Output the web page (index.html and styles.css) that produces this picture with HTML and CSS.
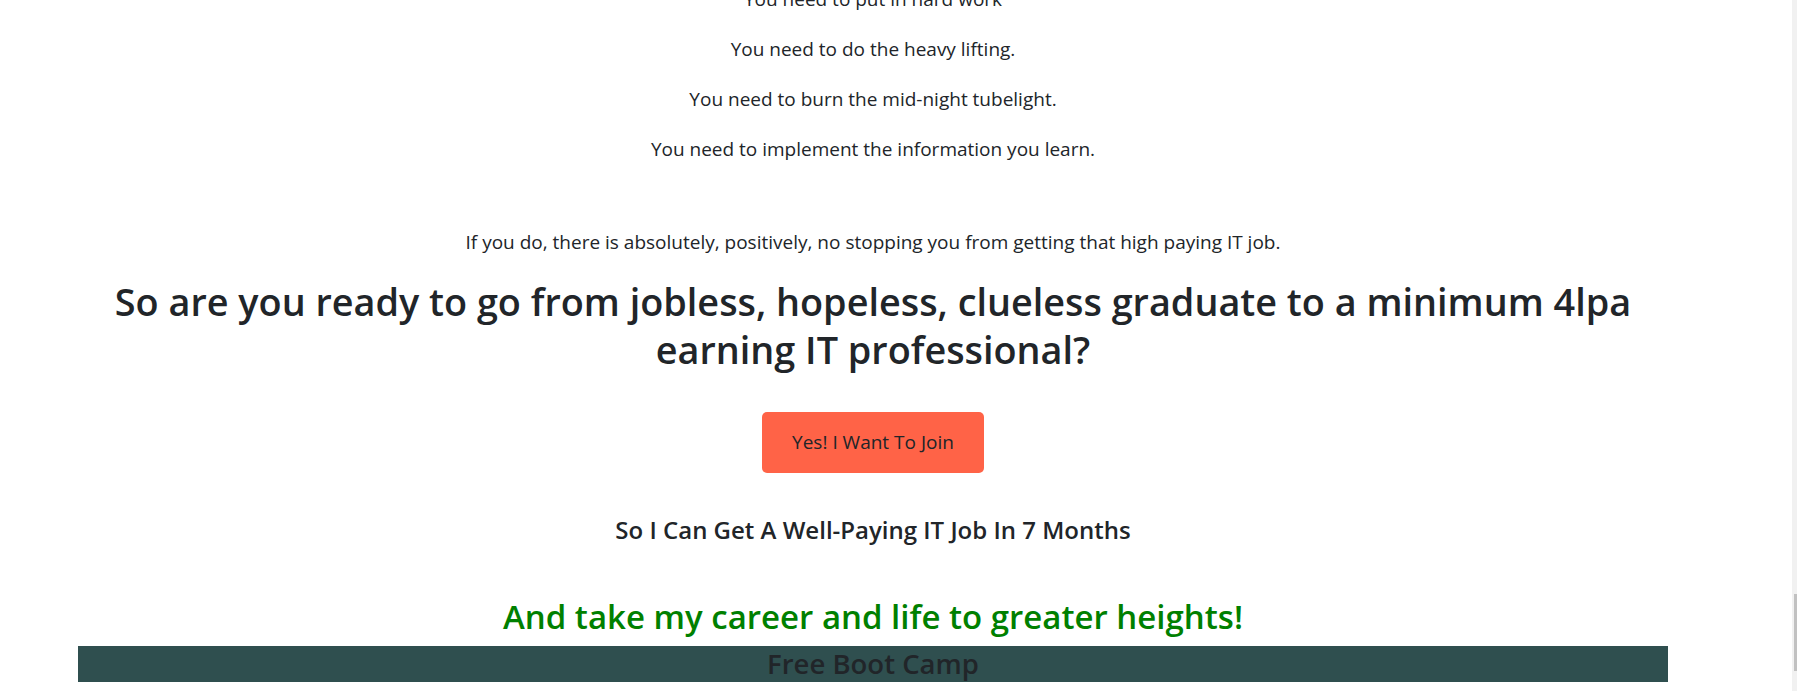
FILE: index.html
```html
<!DOCTYPE html>
<html lang="en">
<head>
<meta charset="utf-8">
<title>Free Boot Camp</title>
<link rel="stylesheet" href="styles.css">
</head>
<body>
<main class="page">
  <section class="intro">
    <p class="intro-line">You need to put in hard work</p>
    <p class="intro-line">You need to do the heavy lifting.</p>
    <p class="intro-line">You need to burn the mid-night tubelight.</p>
    <p class="intro-line">You need to implement the information you learn.</p>
    <p class="intro-line conclusion">If you do, there is absolutely, positively, no stopping you from getting that high paying IT job.</p>
  </section>
  <h1 class="cta-title">So are you ready to go from jobless, hopeless, clueless graduate to a minimum 4lpa earning IT professional?</h1>
  <div class="cta-action">
    <a class="join-btn" href="#">Yes! I Want To Join</a>
  </div>
  <h4 class="cta-sub">So I Can Get A Well-Paying IT Job In 7 Months</h4>
  <h2 class="cta-green">And take my career and life to greater heights!</h2>
  <h3 class="bootcamp-bar">Free Boot Camp</h3>
</main>
<div class="scrollbar"><div class="scrollbar-thumb"></div></div>
</body>
</html>
```

FILE: styles.css
```css
html, body {
  margin: 0;
  padding: 0;
  height: 100%;
  overflow: hidden;
  background: #ffffff;
}

body {
  font-family: "Open Sans", "Noto Sans", "Liberation Sans", sans-serif;
  color: #212529;
}

.page {
  width: 1590px;
  margin: -13px 0 0 78px;
  text-align: center;
}

.intro-line {
  font-size: 19px;
  line-height: 24px;
  margin: 0 0 26px;
}

.conclusion {
  margin-top: 69px;
  margin-bottom: 0;
}

.cta-title {
  font-size: 37.8px;
  font-weight: 600;
  line-height: 48px;
  margin: 24px 0 0;
}

.cta-action {
  margin-top: 38px;
}

.join-btn {
  display: inline-block;
  background: #ff6347;
  color: #212529;
  text-decoration: none;
  font-size: 19px;
  line-height: 33px;
  padding: 14px 30px;
  border-radius: 5px;
}

.cta-sub {
  font-size: 24px;
  font-weight: 600;
  line-height: 29px;
  margin: 42px 0 0;
}

.cta-green {
  color: #008000;
  font-size: 33px;
  font-weight: 600;
  line-height: 38px;
  margin: 54px 0 0;
}

.bootcamp-bar {
  background: #2f4f4f;
  color: #212529;
  font-size: 27.5px;
  font-weight: 600;
  line-height: 36px;
  height: 36px;
  margin: 10px 0 0;
}

.scrollbar {
  position: fixed;
  top: 0;
  right: 0;
  width: 5px;
  height: 100%;
  background: #f1f1f1;
}

.scrollbar-thumb {
  position: absolute;
  top: 594px;
  right: 0;
  width: 3px;
  height: 77px;
  background: #c1c1c1;
}
```
